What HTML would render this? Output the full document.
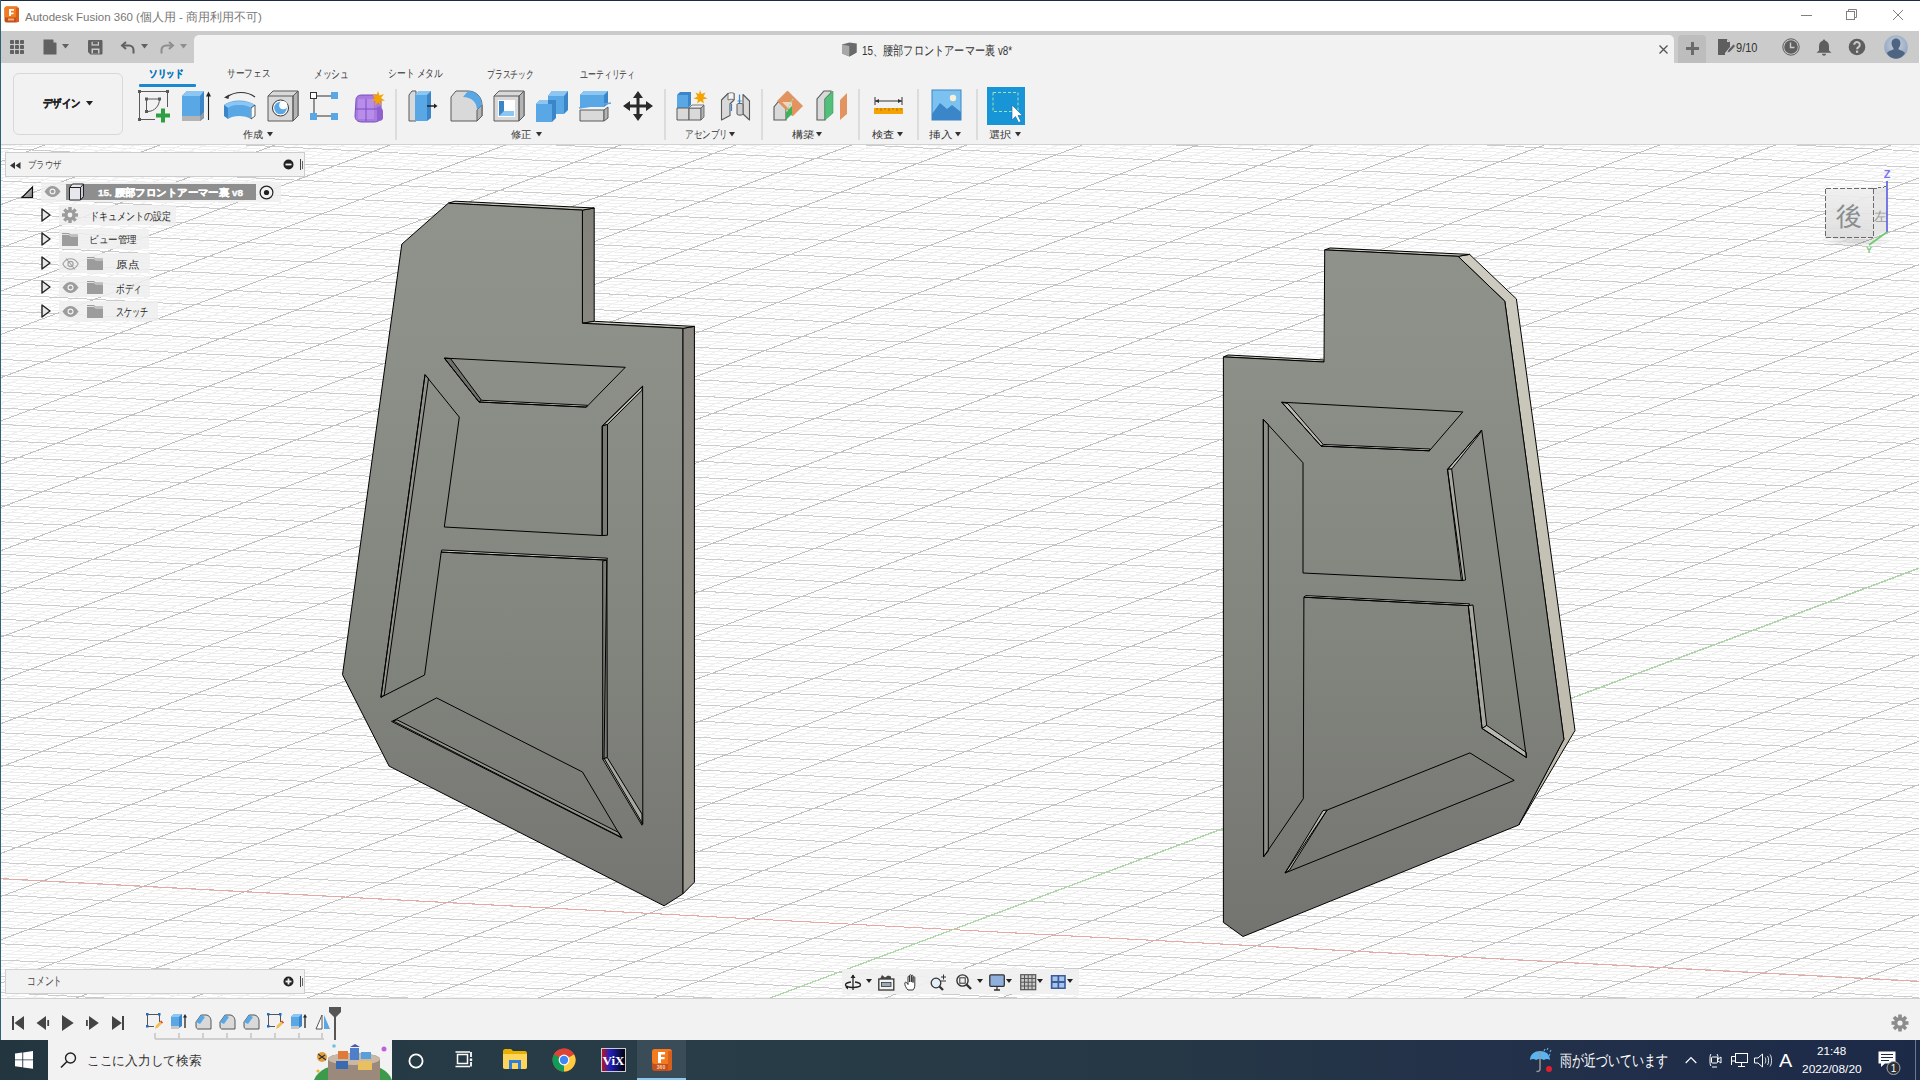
<!DOCTYPE html>
<html><head><meta charset="utf-8"><title>Fusion 360</title>
<style>
*{box-sizing:border-box}
html,body{margin:0;padding:0}
body{width:1920px;height:1080px;overflow:hidden;position:relative;background:#fff;font-family:"Liberation Sans", sans-serif;color:#333}
.a{position:absolute}
.t{position:absolute;white-space:nowrap;line-height:1}
svg{position:absolute;overflow:visible}
</style></head><body>
<svg class="a" style="left:0;top:0" width="1920" height="1080" viewBox="0 0 1920 1080">
<defs>
<linearGradient id="gf" x1="0" y1="200" x2="0" y2="940" gradientUnits="userSpaceOnUse">
<stop offset="0" stop-color="#90928c"/><stop offset="0.203" stop-color="#8d8f89"/><stop offset="0.601" stop-color="#82847e"/><stop offset="0.905" stop-color="#777873"/><stop offset="1" stop-color="#737470"/></linearGradient>
<linearGradient id="gs" x1="0" y1="208" x2="0" y2="890" gradientUnits="userSpaceOnUse">
<stop offset="0" stop-color="#83827a"/><stop offset="0.58" stop-color="#95928a"/><stop offset="1" stop-color="#9d9b91"/></linearGradient>
<linearGradient id="gr" x1="0" y1="255" x2="0" y2="820" gradientUnits="userSpaceOnUse">
<stop offset="0" stop-color="#cdcbbf"/><stop offset="1" stop-color="#bcb9ab"/></linearGradient>
<clipPath id="vpc"><rect x="1" y="145" width="1918" height="853"/></clipPath>
</defs>
<rect x="0" y="145" width="1920" height="853" fill="#ffffff"/>
<g clip-path="url(#vpc)" shape-rendering="crispEdges" fill="none">
<path d="M1.0 152.7L21.6 145.0M1.0 170.0L67.6 145.0M1.0 178.7L90.6 145.0M1.0 187.3L113.7 145.0M1.0 196.0L136.7 145.0M1.0 213.3L182.8 145.0M1.0 221.9L205.8 145.0M1.0 230.6L228.9 145.0M1.0 239.2L251.9 145.0M1.0 256.5L298.0 145.0M1.0 265.2L321.1 145.0M1.0 273.8L344.1 145.0M1.0 282.5L367.1 145.0M1.0 299.8L413.3 145.0M1.0 308.4L436.3 145.0M1.0 317.1L459.4 145.0M1.0 325.7L482.4 145.0M1.0 343.0L528.5 145.0M1.0 351.7L551.6 145.0M1.0 360.3L574.6 145.0M1.0 369.0L597.7 145.0M1.0 386.3L643.8 145.0M1.0 394.9L666.9 145.0M1.0 403.6L690.0 145.0M1.0 412.2L713.0 145.0M1.0 429.5L759.2 145.0M1.0 438.1L782.2 145.0M1.0 446.8L805.3 145.0M1.0 455.4L828.4 145.0M1.0 472.7L874.5 145.0M1.0 481.4L897.6 145.0M1.0 490.0L920.7 145.0M1.0 498.7L943.8 145.0M1.0 516.0L989.9 145.0M1.0 524.6L1013.0 145.0M1.0 533.3L1036.1 145.0M1.0 541.9L1059.2 145.0M1.0 559.2L1105.4 145.0M1.0 567.9L1128.4 145.0M1.0 576.5L1151.5 145.0M1.0 585.2L1174.6 145.0M1.0 602.5L1220.8 145.0M1.0 611.1L1243.9 145.0M1.0 619.8L1267.0 145.0M1.0 628.4L1290.1 145.0M1.0 645.7L1336.3 145.0M1.0 654.4L1359.4 145.0M1.0 663.0L1382.5 145.0M1.0 671.7L1405.6 145.0M1.0 689.0L1451.8 145.0M1.0 697.6L1474.9 145.0M1.0 706.3L1498.0 145.0M1.0 714.9L1521.2 145.0M1.0 732.2L1567.4 145.0M1.0 740.8L1590.5 145.0M1.0 749.5L1613.6 145.0M1.0 758.1L1636.7 145.0M1.0 775.4L1683.0 145.0M1.0 784.1L1706.1 145.0M1.0 792.7L1729.2 145.0M1.0 801.4L1752.3 145.0M1.0 818.7L1798.6 145.0M1.0 827.3L1821.7 145.0M1.0 836.0L1844.8 145.0M1.0 844.6L1868.0 145.0M1.0 861.9L1914.2 145.0M1.0 870.6L1919.0 151.9M1.0 879.2L1919.0 160.5M1.0 887.9L1919.0 169.2M1.0 905.2L1919.0 186.6M1.0 913.8L1919.0 195.2M1.0 922.5L1919.0 203.9M1.0 931.1L1919.0 212.6M1.0 948.4L1919.0 229.9M1.0 957.0L1919.0 238.6M1.0 965.7L1919.0 247.2M1.0 974.3L1919.0 255.9M1.0 991.6L1919.0 273.2M7.1 998.0L1919.0 281.9M30.2 998.0L1919.0 290.6M53.3 998.0L1919.0 299.2M99.5 998.0L1919.0 316.6M122.5 998.0L1919.0 325.2M145.6 998.0L1919.0 333.9M168.7 998.0L1919.0 342.6M214.9 998.0L1919.0 359.9M238.0 998.0L1919.0 368.6M261.1 998.0L1919.0 377.2M284.2 998.0L1919.0 385.9M330.4 998.0L1919.0 403.2M353.5 998.0L1919.0 411.9M376.7 998.0L1919.0 420.6M399.8 998.0L1919.0 429.2M446.0 998.0L1919.0 446.6M469.1 998.0L1919.0 455.2M492.2 998.0L1919.0 463.9M515.3 998.0L1919.0 472.6M561.6 998.0L1919.0 489.9M584.7 998.0L1919.0 498.6M607.8 998.0L1919.0 507.3M630.9 998.0L1919.0 515.9M677.2 998.0L1919.0 533.3M700.3 998.0L1919.0 541.9M723.4 998.0L1919.0 550.6M746.5 998.0L1919.0 559.3M792.8 998.0L1919.0 576.6M815.9 998.0L1919.0 585.3M839.1 998.0L1919.0 593.9M862.2 998.0L1919.0 602.6M908.5 998.0L1919.0 619.9M931.6 998.0L1919.0 628.6M954.7 998.0L1919.0 637.3M977.9 998.0L1919.0 645.9M1024.2 998.0L1919.0 663.3M1047.3 998.0L1919.0 671.9M1070.4 998.0L1919.0 680.6M1093.6 998.0L1919.0 689.3M1139.9 998.0L1919.0 706.6M1163.0 998.0L1919.0 715.3M1186.2 998.0L1919.0 723.9M1209.3 998.0L1919.0 732.6M1255.6 998.0L1919.0 749.9M1278.8 998.0L1919.0 758.6M1302.0 998.0L1919.0 767.3M1325.1 998.0L1919.0 775.9M1371.4 998.0L1919.0 793.3M1394.6 998.0L1919.0 801.9M1417.8 998.0L1919.0 810.6M1440.9 998.0L1919.0 819.3M1487.3 998.0L1919.0 836.6M1510.4 998.0L1919.0 845.3M1533.6 998.0L1919.0 853.9M1556.8 998.0L1919.0 862.6M1603.1 998.0L1919.0 879.9M1626.3 998.0L1919.0 888.6M1649.5 998.0L1919.0 897.2M1672.6 998.0L1919.0 905.9M1719.0 998.0L1919.0 923.2M1742.2 998.0L1919.0 931.9M1765.4 998.0L1919.0 940.6M1788.5 998.0L1919.0 949.2M1834.9 998.0L1919.0 966.6M1858.1 998.0L1919.0 975.2M1881.3 998.0L1919.0 983.9M1904.5 998.0L1919.0 992.6M1.0 995.7L43.5 998.0M1.0 989.2L165.0 998.0M1.0 986.0L225.8 998.0M1.0 982.7L286.5 998.0M1.0 979.5L347.3 998.0M1.0 973.0L468.9 998.0M1.0 969.8L529.7 998.0M1.0 966.5L590.6 998.0M1.0 963.3L651.4 998.0M1.0 956.8L773.1 998.0M1.0 953.5L833.9 998.0M1.0 950.3L894.8 998.0M1.0 947.0L955.7 998.0M1.0 940.5L1077.5 998.0M1.0 937.3L1138.4 998.0M1.0 934.1L1199.3 998.0M1.0 930.8L1260.2 998.0M1.0 924.3L1382.0 998.0M1.0 921.1L1443.0 998.0M1.0 917.8L1503.9 998.0M1.0 914.6L1564.9 998.0M1.0 908.1L1686.8 998.0M1.0 904.8L1747.8 998.0M1.0 901.6L1808.8 998.0M1.0 898.3L1869.8 998.0M1.0 891.9L1919.0 994.1M1.0 888.6L1919.0 990.9M1.0 885.4L1919.0 987.6M1.0 882.1L1919.0 984.4M1.0 875.6L1919.0 977.8M1.0 872.4L1919.0 974.6M1.0 869.1L1919.0 971.3M1.0 865.9L1919.0 968.1M1.0 859.4L1919.0 961.6M1.0 856.1L1919.0 958.3M1.0 852.9L1919.0 955.1M1.0 849.7L1919.0 951.8M1.0 843.2L1919.0 945.3M1.0 839.9L1919.0 942.1M1.0 836.7L1919.0 938.8M1.0 833.4L1919.0 935.6M1.0 826.9L1919.0 929.0M1.0 823.7L1919.0 925.8M1.0 820.4L1919.0 922.5M1.0 817.2L1919.0 919.3M1.0 810.7L1919.0 912.8M1.0 807.5L1919.0 909.5M1.0 804.2L1919.0 906.3M1.0 801.0L1919.0 903.0M1.0 794.5L1919.0 896.5M1.0 791.2L1919.0 893.3M1.0 788.0L1919.0 890.0M1.0 784.7L1919.0 886.8M1.0 778.2L1919.0 880.2M1.0 775.0L1919.0 877.0M1.0 771.7L1919.0 873.7M1.0 768.5L1919.0 870.5M1.0 762.0L1919.0 864.0M1.0 758.8L1919.0 860.7M1.0 755.5L1919.0 857.5M1.0 752.3L1919.0 854.2M1.0 745.8L1919.0 847.7M1.0 742.5L1919.0 844.5M1.0 739.3L1919.0 841.2M1.0 736.0L1919.0 838.0M1.0 729.5L1919.0 831.4M1.0 726.3L1919.0 828.2M1.0 723.1L1919.0 824.9M1.0 719.8L1919.0 821.7M1.0 713.3L1919.0 815.2M1.0 710.1L1919.0 811.9M1.0 706.8L1919.0 808.7M1.0 703.6L1919.0 805.4M1.0 697.1L1919.0 798.9M1.0 693.8L1919.0 795.7M1.0 690.6L1919.0 792.4M1.0 687.3L1919.0 789.1M1.0 680.8L1919.0 782.6M1.0 677.6L1919.0 779.4M1.0 674.4L1919.0 776.1M1.0 671.1L1919.0 772.9M1.0 664.6L1919.0 766.4M1.0 661.4L1919.0 763.1M1.0 658.1L1919.0 759.9M1.0 654.9L1919.0 756.6M1.0 648.4L1919.0 750.1M1.0 645.1L1919.0 746.9M1.0 641.9L1919.0 743.6M1.0 638.6L1919.0 740.3M1.0 632.2L1919.0 733.8M1.0 628.9L1919.0 730.6M1.0 625.7L1919.0 727.3M1.0 622.4L1919.0 724.1M1.0 615.9L1919.0 717.6M1.0 612.7L1919.0 714.3M1.0 609.4L1919.0 711.1M1.0 606.2L1919.0 707.8M1.0 599.7L1919.0 701.3M1.0 596.4L1919.0 698.0M1.0 593.2L1919.0 694.8M1.0 589.9L1919.0 691.5M1.0 583.5L1919.0 685.0M1.0 580.2L1919.0 681.8M1.0 577.0L1919.0 678.5M1.0 573.7L1919.0 675.3M1.0 567.2L1919.0 668.8M1.0 564.0L1919.0 665.5M1.0 560.7L1919.0 662.3M1.0 557.5L1919.0 659.0M1.0 551.0L1919.0 652.5M1.0 547.7L1919.0 649.2M1.0 544.5L1919.0 646.0M1.0 541.3L1919.0 642.7M1.0 534.8L1919.0 636.2M1.0 531.5L1919.0 633.0M1.0 528.3L1919.0 629.7M1.0 525.0L1919.0 626.5M1.0 518.5L1919.0 620.0M1.0 515.3L1919.0 616.7M1.0 512.0L1919.0 613.4M1.0 508.8L1919.0 610.2M1.0 502.3L1919.0 603.7M1.0 499.0L1919.0 600.4M1.0 495.8L1919.0 597.2M1.0 492.6L1919.0 593.9M1.0 486.1L1919.0 587.4M1.0 482.8L1919.0 584.2M1.0 479.6L1919.0 580.9M1.0 476.3L1919.0 577.7M1.0 469.8L1919.0 571.2M1.0 466.6L1919.0 567.9M1.0 463.3L1919.0 564.6M1.0 460.1L1919.0 561.4M1.0 453.6L1919.0 554.9M1.0 450.3L1919.0 551.6M1.0 447.1L1919.0 548.4M1.0 443.9L1919.0 545.1M1.0 437.4L1919.0 538.6M1.0 434.1L1919.0 535.4M1.0 430.9L1919.0 532.1M1.0 427.6L1919.0 528.9M1.0 421.1L1919.0 522.3M1.0 417.9L1919.0 519.1M1.0 414.6L1919.0 515.8M1.0 411.4L1919.0 512.6M1.0 404.9L1919.0 506.1M1.0 401.6L1919.0 502.8M1.0 398.4L1919.0 499.6M1.0 395.2L1919.0 496.3M1.0 388.7L1919.0 489.8M1.0 385.4L1919.0 486.6M1.0 382.2L1919.0 483.3M1.0 378.9L1919.0 480.0M1.0 372.4L1919.0 473.5M1.0 369.2L1919.0 470.3M1.0 365.9L1919.0 467.0M1.0 362.7L1919.0 463.8M1.0 356.2L1919.0 457.3M1.0 352.9L1919.0 454.0M1.0 349.7L1919.0 450.8M1.0 346.5L1919.0 447.5M1.0 340.0L1919.0 441.0M1.0 336.7L1919.0 437.7M1.0 333.5L1919.0 434.5M1.0 330.2L1919.0 431.2M1.0 323.7L1919.0 424.7M1.0 320.5L1919.0 421.5M1.0 317.2L1919.0 418.2M1.0 314.0L1919.0 415.0M1.0 307.5L1919.0 408.5M1.0 304.2L1919.0 405.2M1.0 301.0L1919.0 401.9M1.0 297.8L1919.0 398.7M1.0 291.3L1919.0 392.2M1.0 288.0L1919.0 388.9M1.0 284.8L1919.0 385.7M1.0 281.5L1919.0 382.4M1.0 275.0L1919.0 375.9M1.0 271.8L1919.0 372.7M1.0 268.5L1919.0 369.4M1.0 265.3L1919.0 366.2M1.0 258.8L1919.0 359.6M1.0 255.5L1919.0 356.4M1.0 252.3L1919.0 353.1M1.0 249.1L1919.0 349.9M1.0 242.6L1919.0 343.4M1.0 239.3L1919.0 340.1M1.0 236.1L1919.0 336.9M1.0 232.8L1919.0 333.6M1.0 226.3L1919.0 327.1M1.0 223.1L1919.0 323.9M1.0 219.8L1919.0 320.6M1.0 216.6L1919.0 317.3M1.0 210.1L1919.0 310.8M1.0 206.8L1919.0 307.6M1.0 203.6L1919.0 304.3M1.0 200.4L1919.0 301.1M1.0 193.9L1919.0 294.6M1.0 190.6L1919.0 291.3M1.0 187.4L1919.0 288.1M1.0 184.1L1919.0 284.8M1.0 177.6L1919.0 278.3M1.0 174.4L1919.0 275.0M1.0 171.1L1919.0 271.8M1.0 167.9L1919.0 268.5M1.0 161.4L1919.0 262.0M1.0 158.1L1919.0 258.8M1.0 154.9L1919.0 255.5M1.0 151.6L1919.0 252.3M1.0 145.2L1919.0 245.8M60.0 145.0L1919.0 242.5M121.9 145.0L1919.0 239.2M183.8 145.0L1919.0 236.0M307.7 145.0L1919.0 229.5M369.7 145.0L1919.0 226.2M431.6 145.0L1919.0 223.0M493.6 145.0L1919.0 219.7M617.6 145.0L1919.0 213.2M679.6 145.0L1919.0 210.0M741.6 145.0L1919.0 206.7M803.6 145.0L1919.0 203.5M927.6 145.0L1919.0 196.9M989.7 145.0L1919.0 193.7M1051.7 145.0L1919.0 190.4M1113.8 145.0L1919.0 187.2M1237.9 145.0L1919.0 180.7M1300.0 145.0L1919.0 177.4M1362.1 145.0L1919.0 174.2M1424.2 145.0L1919.0 170.9M1548.5 145.0L1919.0 164.4M1610.6 145.0L1919.0 161.1M1672.7 145.0L1919.0 157.9M1734.9 145.0L1919.0 154.6M1859.2 145.0L1919.0 148.1" stroke="#efefef" stroke-width="1"/>
<path d="M1.0 992.5L104.2 998.0M1.0 976.3L408.1 998.0M1.0 960.0L712.2 998.0M1.0 943.8L1016.6 998.0M1.0 927.6L1321.1 998.0M1.0 911.3L1625.9 998.0M1.0 895.1L1919.0 997.4M1.0 878.9L1919.0 981.1M1.0 862.6L1919.0 964.8M1.0 846.4L1919.0 948.6M1.0 830.2L1919.0 932.3M1.0 813.9L1919.0 916.0M1.0 797.7L1919.0 899.8M1.0 781.5L1919.0 883.5M1.0 765.3L1919.0 867.2M1.0 749.0L1919.0 851.0M1.0 732.8L1919.0 834.7M1.0 716.6L1919.0 818.4M1.0 700.3L1919.0 802.2M1.0 684.1L1919.0 785.9M1.0 667.9L1919.0 769.6M1.0 651.6L1919.0 753.4M1.0 635.4L1919.0 737.1M1.0 619.2L1919.0 720.8M1.0 602.9L1919.0 704.6M1.0 586.7L1919.0 688.3M1.0 570.5L1919.0 672.0M1.0 554.2L1919.0 655.7M1.0 538.0L1919.0 639.5M1.0 521.8L1919.0 623.2M1.0 505.5L1919.0 606.9M1.0 489.3L1919.0 590.7M1.0 473.1L1919.0 574.4M1.0 456.8L1919.0 558.1M1.0 440.6L1919.0 541.9M1.0 424.4L1919.0 525.6M1.0 408.1L1919.0 509.3M1.0 391.9L1919.0 493.1M1.0 375.7L1919.0 476.8M1.0 359.4L1919.0 460.5M1.0 343.2L1919.0 444.2M1.0 327.0L1919.0 428.0M1.0 310.7L1919.0 411.7M1.0 294.5L1919.0 395.4M1.0 278.3L1919.0 379.2M1.0 262.0L1919.0 362.9M1.0 245.8L1919.0 346.6M1.0 229.6L1919.0 330.4M1.0 213.3L1919.0 314.1M1.0 197.1L1919.0 297.8M1.0 180.9L1919.0 281.5M1.0 164.6L1919.0 265.3M1.0 148.4L1919.0 249.0M245.8 145.0L1919.0 232.7M555.6 145.0L1919.0 216.5M865.6 145.0L1919.0 200.2M1175.9 145.0L1919.0 183.9M1486.3 145.0L1919.0 167.7M1797.1 145.0L1919.0 151.4" stroke="#cbcbcb" stroke-width="1"/>
<path d="M1.0 161.4L44.6 145.0M1.0 204.6L159.8 145.0M1.0 247.9L275.0 145.0M1.0 291.1L390.2 145.0M1.0 334.4L505.5 145.0M1.0 377.6L620.8 145.0M1.0 420.9L736.1 145.0M1.0 464.1L851.5 145.0M1.0 507.3L966.8 145.0M1.0 550.6L1082.3 145.0M1.0 593.8L1197.7 145.0M1.0 637.1L1313.2 145.0M1.0 680.3L1428.7 145.0M1.0 723.6L1544.3 145.0M1.0 766.8L1659.8 145.0M1.0 810.0L1775.5 145.0M1.0 853.3L1891.1 145.0M1.0 896.5L1919.0 177.9M1.0 939.7L1919.0 221.2M1.0 983.0L1919.0 264.6M76.4 998.0L1919.0 307.9M191.8 998.0L1919.0 351.2M307.3 998.0L1919.0 394.6M422.9 998.0L1919.0 437.9M538.4 998.0L1919.0 481.2M654.0 998.0L1919.0 524.6M769.7 998.0L1919.0 567.9M885.3 998.0L1919.0 611.3M1001.0 998.0L1919.0 654.6M1116.7 998.0L1919.0 697.9M1232.5 998.0L1919.0 741.3M1348.3 998.0L1919.0 784.6M1464.1 998.0L1919.0 827.9M1579.9 998.0L1919.0 871.3M1695.8 998.0L1919.0 914.6M1811.7 998.0L1919.0 957.9" stroke="#c0c0c0" stroke-width="1"/>
<path d="M0 878.5L1919 981.5" stroke="#e6a8a4" stroke-width="1"/>
<path d="M771.9 997.5L1919 568.5" stroke="#a8dea0" stroke-width="1"/>
</g>
<g stroke="#000" stroke-width="1" stroke-linejoin="miter">
<polygon points="582.4,210.1 594.2,208 594.2,321.3 582.4,323.3" fill="url(#gs)"/>
<polygon points="682.8,328.3 694.4,326.4 694.4,882.2 682.8,893.9" fill="url(#gs)"/>
<polygon points="448.3,203.2 455,201.2 594.2,208 582.4,210.1" fill="#c9c7bb"/>
<polygon points="582.4,323.3 594.2,321.3 694.4,326.4 682.8,328.3" fill="#c9c7bb"/>
<polygon points="401.8,244.2 448.3,203.2 582.4,210.1 582.4,323.3 682.8,328.3 682.8,893.9 664.1,905.8 389.1,766.1 342.5,674.7" fill="url(#gf)"/>
<polygon points="1458,256.3 1469.6,254.4 1516.4,298.9 1575,730.5 1518.7,825 1563.9,739.3 1504.8,301.2" fill="url(#gr)"/>
<polygon points="1324.7,249.9 1330,248 1469.6,254.4 1458,256.3" fill="#c9c7bb"/>
<polygon points="1223.6,356.9 1228,355 1324.7,360 1324,362" fill="#c9c7bb"/>
<polygon points="1324.7,249.9 1458,256.3 1504.8,301.2 1563.9,739.3 1518.7,825 1243,936.5 1223.4,922.4 1223.4,356.9 1324,362" fill="url(#gf)"/>
</g>
<g stroke="#000" stroke-width="1">
<polygon points="444.3,358.1 450.5,358.6 481.5,400.3 479,402" fill="#6f706b"/><polygon points="479,402 481.5,400.3 587.5,405.3 586.4,407.1" fill="#c4c4bc"/><polygon points="425,374.7 428.5,378.5 384.3,694.8 380.9,697.3" fill="#90918c"/><polygon points="642.6,386.2 641.9,390.4 607.5,424.4 602.4,426" fill="#bdbdb5"/><polygon points="602.4,426 607.5,424.4 607.5,535.2 602.1,535.6" fill="#7a7a75"/><polygon points="441.2,552.1 441.8,550 607.5,558.2 606.9,560.1" fill="#c4c4bc"/><polygon points="602.7,561 606.9,560.1 607.3,757.6 602.7,759" fill="#7a7a75"/><polygon points="602.7,759 607.3,757.6 642,814 642,825.2" fill="#a8a8a0"/><polygon points="391.5,721.4 397,719.8 618.9,832.6 622.1,838.1" fill="#92928d"/><polygon points="1281.7,402.2 1287.8,403.6 1323.9,445.3 1321.1,446.1" fill="#b8b8b0"/><polygon points="1321.1,446.1 1323.9,444.5 1430,449 1429.4,450.8" fill="#c4c4bc"/><polygon points="1263.3,419.4 1268.3,424.4 1268.3,851 1263.6,856.8" fill="#8e8f8a"/><polygon points="1481.7,430 1479.4,434.2 1451.7,468.9 1447.5,469.4" fill="#c0c0b8"/><polygon points="1447.5,469.4 1451.7,468.9 1465.6,580 1461.4,580.6" fill="#a8a8a0"/><polygon points="1303.9,597.2 1305.8,595.6 1469.7,603.9 1468.3,605.6" fill="#c4c4bc"/><polygon points="1468.3,605.6 1473,605 1486.7,725.4 1482.1,728.5" fill="#a8a8a0"/><polygon points="1482.1,728.5 1486.7,725.4 1526.4,752.5 1526.4,757.5" fill="#b8b8b0"/><polygon points="1285,873 1289.5,870 1327.2,810 1323,810.5" fill="#b8b8b0"/>
</g>
<g stroke="#000" stroke-width="1" fill="none">
<polygon points="425,374.7 459.3,417.1 444.3,527 602.1,535.6 602.1,426.1 642.6,386.3 642.8,824.2 604,758.2 606.9,560.1 441.2,552.1 424.6,675 380.9,697.3"/><polygon points="444.3,358.1 625.3,367.3 586.4,407.1 479,402"/><polygon points="436.6,697.9 582.5,772 621.2,837.2 393,720.9"/>
<polygon points="1263.3,419.4 1303,462.8 1303,573 1462.8,580.6 1447.5,469.4 1481.7,430 1526.4,757.5 1482.1,728.5 1468.3,605.6 1303.9,597.2 1303.3,798.75 1263.6,856.8"/><polygon points="1281.7,402.2 1462.8,411.9 1429.4,450.8 1321.1,446.1"/><polygon points="1327.2,810 1469.9,752.9 1514.2,780.4 1285,873"/>
</g>
</svg>
<svg style="left:1815px;top:160px" width="95" height="100" viewBox="1815 160 95 100">
<defs><linearGradient id="vc" x1="0" y1="0" x2="0" y2="1"><stop offset="0" stop-color="#efefef"/><stop offset="1" stop-color="#dcdcdc"/></linearGradient>
<radialGradient id="vsh" cx="0.5" cy="0.5" r="0.5"><stop offset="0" stop-color="#000" stop-opacity="0.16"/><stop offset="1" stop-color="#000" stop-opacity="0"/></radialGradient></defs>
<ellipse cx="1856" cy="241" rx="38" ry="6" fill="url(#vsh)"/>
<path d="M1825 188H1873V238H1825z" fill="url(#vc)" opacity="0.9"/>
<path d="M1873 188L1887 186V231L1873 238z" fill="#e4e4e4" opacity="0.9"/>
<g fill="none" stroke="#6a6a6a" stroke-width="1" shape-rendering="crispEdges">
<path d="M1825.5 188.5H1873.5M1825.5 188.5V237.5" stroke-dasharray="5 2"/>
<path d="M1873.5 189V238" stroke-dasharray="5 2"/><path d="M1825.5 237.5H1873" stroke-dasharray="5 2"/>
<path d="M1873.5 188.5L1887 186.5" stroke-dasharray="3 2"/></g>
<text x="1849" y="225" font-size="26" text-anchor="middle" fill="#8a8d90" font-family="Liberation Sans, sans-serif">後</text>
<text x="1880" y="221" font-size="13" text-anchor="middle" fill="#9a9a9a" font-family="Liberation Sans, sans-serif">左</text>
<path d="M1887 181V232" stroke="#5a5ae0" stroke-width="1.6"/>
<path d="M1887 232L1869 245" stroke="#6ccc6c" stroke-width="1.6"/>
<text x="1887" y="178" font-size="11" text-anchor="middle" fill="#7474ee" font-weight="bold" font-family="Liberation Sans, sans-serif">Z</text>
<text x="1869" y="253" font-size="9" text-anchor="middle" fill="#6ccc6c" font-weight="bold" font-family="Liberation Sans, sans-serif">Y</text>
</svg>

<div class="a" style="left:5px;top:152px;width:300px;height:25px;background:#f2f2f2;border:1px solid #cdcdcd"></div>
<svg style="left:10px;top:162px" width="11" height="7" viewBox="0 0 11 7" fill="#333"><path d="M0 3.5L5 0V7z M5.5 3.5L10.5 0V7z"/></svg>
<svg style="left:283px;top:159px" width="11" height="11" viewBox="0 0 11 11"><circle cx="5.5" cy="5.5" r="5" fill="#222"/><rect x="2.5" y="4.6" width="6" height="1.8" fill="#f2f2f2"/></svg>
<div class="a" style="left:300px;top:159px;width:1px;height:11px;background:#444"></div>
<div class="a" style="left:302px;top:161px;width:1px;height:8px;background:#666"></div>
<div class="a" style="left:41px;top:182px;width:240px;height:20px;background:rgba(238,238,238,0.85)"></div>
<svg style="left:21px;top:186px" width="13" height="13" viewBox="0 0 13 13"><defs><linearGradient id="tg" x1="0" y1="0" x2="1" y2="1"><stop offset="0" stop-color="#eee"/><stop offset="1" stop-color="#777"/></linearGradient></defs><path d="M11.5 1V11.5H1z" fill="url(#tg)" stroke="#111" stroke-width="1.2" stroke-linejoin="miter"/></svg>
<svg style="left:44px;top:186px" width="17" height="11" viewBox="0 0 17 11"><path d="M0.5 5.5C3 1.5 6 0 8.5 0S14 1.5 16.5 5.5C14 9.5 11 11 8.5 11S3 9.5 0.5 5.5z" fill="#9c9c9c"/>
<circle cx="8.5" cy="5.5" r="3" fill="#f2f2f2"/><circle cx="8.5" cy="5.5" r="1.8" fill="#9c9c9c"/></svg>
<div class="a" style="left:66px;top:184px;width:190px;height:16px;background:#8e8e8e"></div>
<svg style="left:68px;top:183px" width="17" height="18" viewBox="0 0 17 18"><path d="M1.5 4.5L4.5 1H15.5V13.5L12.5 17H1.5z" fill="#e6e8ee" stroke="#222" stroke-width="1"/><path d="M12.5 4.5L15.5 1V13.5L12.5 17z" fill="#c8ccd6" stroke="#222" stroke-width="1"/><path d="M1.5 4.5H12.5V17" fill="none" stroke="#222" stroke-width="1"/></svg>
<svg style="left:259px;top:185px" width="15" height="15" viewBox="0 0 15 15"><circle cx="7.5" cy="7.5" r="6.4" fill="#f2f2f2" stroke="#222" stroke-width="1.2"/><circle cx="7.5" cy="7.5" r="2.6" fill="#222"/></svg>
<div class="a" style="left:59px;top:205px;width:117px;height:20px;background:rgba(238,238,238,0.85)"></div>
<svg style="left:41px;top:208px" width="10" height="14" viewBox="0 0 10 14"><path d="M1 1L9 7L1 13z" fill="#e8e8e8" stroke="#222" stroke-width="1.4" stroke-linejoin="round"/></svg>
<svg style="left:62px;top:207px" width="16" height="16" viewBox="0 0 16 16"><g fill="#9c9c9c"><circle cx="8" cy="8" r="5.6"/>
<rect x="6.3" y="0" width="3.4" height="16"/><rect x="0" y="6.3" width="16" height="3.4"/><rect x="6.3" y="0" width="3.4" height="16" transform="rotate(45 8 8)"/><rect x="6.3" y="0" width="3.4" height="16" transform="rotate(-45 8 8)"/></g><circle cx="8" cy="8" r="2.4" fill="#f2f2f2"/></svg>

<div class="a" style="left:59px;top:229px;width:90px;height:20px;background:rgba(238,238,238,0.85)"></div>
<svg style="left:41px;top:232px" width="10" height="14" viewBox="0 0 10 14"><path d="M1 1L9 7L1 13z" fill="#e8e8e8" stroke="#222" stroke-width="1.4" stroke-linejoin="round"/></svg>
<svg style="left:62px;top:233px" width="17" height="13" viewBox="0 0 17 13" fill="#9c9c9c"><path d="M0 0H7L8.5 1.5H16V2.5H0z"/><rect x="0" y="2" width="16" height="11"/><path d="M0 1.5H7L8.5 3H16" fill="none" stroke="#f2f2f2" stroke-width="0.8"/></svg>

<div class="a" style="left:59px;top:253px;width:91px;height:20px;background:rgba(238,238,238,0.85)"></div>
<svg style="left:41px;top:256px" width="10" height="14" viewBox="0 0 10 14"><path d="M1 1L9 7L1 13z" fill="#e8e8e8" stroke="#222" stroke-width="1.4" stroke-linejoin="round"/></svg>
<svg style="left:62px;top:258px" width="17" height="12" viewBox="0 0 17 12"><path d="M0.8 6C3 2 6 0.8 8.5 0.8S14 2 16.2 6C14 10 11 11.2 8.5 11.2S3 10 0.8 6z" fill="none" stroke="#a0a0a0" stroke-width="1.1"/>
<circle cx="8.5" cy="6" r="2.6" fill="none" stroke="#a0a0a0" stroke-width="1.1"/><path d="M4 0.5L13 11.5" stroke="#a0a0a0" stroke-width="1.1"/></svg>
<svg style="left:87px;top:257px" width="17" height="13" viewBox="0 0 17 13" fill="#9c9c9c"><path d="M0 0H7L8.5 1.5H16V2.5H0z"/><rect x="0" y="2" width="16" height="11"/><path d="M0 1.5H7L8.5 3H16" fill="none" stroke="#f2f2f2" stroke-width="0.8"/></svg>

<div class="a" style="left:59px;top:277px;width:91px;height:20px;background:rgba(238,238,238,0.85)"></div>
<svg style="left:41px;top:280px" width="10" height="14" viewBox="0 0 10 14"><path d="M1 1L9 7L1 13z" fill="#e8e8e8" stroke="#222" stroke-width="1.4" stroke-linejoin="round"/></svg>
<svg style="left:62px;top:282px" width="17" height="11" viewBox="0 0 17 11"><path d="M0.5 5.5C3 1.5 6 0 8.5 0S14 1.5 16.5 5.5C14 9.5 11 11 8.5 11S3 9.5 0.5 5.5z" fill="#9c9c9c"/>
<circle cx="8.5" cy="5.5" r="3" fill="#f2f2f2"/><circle cx="8.5" cy="5.5" r="1.8" fill="#9c9c9c"/></svg>
<svg style="left:87px;top:281px" width="17" height="13" viewBox="0 0 17 13" fill="#9c9c9c"><path d="M0 0H7L8.5 1.5H16V2.5H0z"/><rect x="0" y="2" width="16" height="11"/><path d="M0 1.5H7L8.5 3H16" fill="none" stroke="#f2f2f2" stroke-width="0.8"/></svg>

<div class="a" style="left:59px;top:301px;width:99px;height:20px;background:rgba(238,238,238,0.85)"></div>
<svg style="left:41px;top:304px" width="10" height="14" viewBox="0 0 10 14"><path d="M1 1L9 7L1 13z" fill="#e8e8e8" stroke="#222" stroke-width="1.4" stroke-linejoin="round"/></svg>
<svg style="left:62px;top:306px" width="17" height="11" viewBox="0 0 17 11"><path d="M0.5 5.5C3 1.5 6 0 8.5 0S14 1.5 16.5 5.5C14 9.5 11 11 8.5 11S3 9.5 0.5 5.5z" fill="#9c9c9c"/>
<circle cx="8.5" cy="5.5" r="3" fill="#f2f2f2"/><circle cx="8.5" cy="5.5" r="1.8" fill="#9c9c9c"/></svg>
<svg style="left:87px;top:305px" width="17" height="13" viewBox="0 0 17 13" fill="#9c9c9c"><path d="M0 0H7L8.5 1.5H16V2.5H0z"/><rect x="0" y="2" width="16" height="11"/><path d="M0 1.5H7L8.5 3H16" fill="none" stroke="#f2f2f2" stroke-width="0.8"/></svg>

<div class="a" style="left:5px;top:969px;width:300px;height:25px;background:#f2f2f2;border:1px solid #d0d0d0"></div>
<svg style="left:283px;top:976px" width="11" height="11" viewBox="0 0 11 11"><circle cx="5.5" cy="5.5" r="5" fill="#222"/><rect x="2.5" y="4.6" width="6" height="1.8" fill="#f2f2f2"/><rect x="4.6" y="2.5" width="1.8" height="6" fill="#f2f2f2"/></svg>
<div class="a" style="left:300px;top:976px;width:1px;height:11px;background:#444"></div>
<div class="a" style="left:302px;top:978px;width:1px;height:8px;background:#666"></div>
<div class="a" style="left:842px;top:969px;width:237px;height:25px;background:rgba(240,240,240,0.92)"></div>
<svg style="left:845px;top:974px" width="28" height="17" viewBox="0 0 28 17">
<path d="M8 1V16" stroke="#222" stroke-width="1.3"/><path d="M5.5 4L8 0.5L10.5 4z" fill="#222"/>
<path d="M6 8C2 8.5 0.5 10 0.5 11S3 13.5 8 13.5S15.5 12 15.5 11S14 8.5 10 8" fill="none" stroke="#222" stroke-width="1.3"/>
<path d="M3 11.5L0.5 13.5L3 15.5z" fill="#222"/><path d="M21 5h6l-3 4z" fill="#222"/></svg>
<svg style="left:878px;top:974px" width="17" height="17" viewBox="0 0 17 17"><rect x="0.8" y="5" width="15" height="11" fill="#f2f2f2" stroke="#333" stroke-width="1.3"/><rect x="3.5" y="8.5" width="9.5" height="4" fill="#9aa8b8" stroke="#333" stroke-width="0.8"/><path d="M2 5L4 1L7 3.5L10 1.5L13 2.5V5" fill="#444"/></svg>
<svg style="left:904px;top:974px" width="16" height="17" viewBox="0 0 16 17"><path d="M4 16C2 14 0.5 11 0.8 9C1 8 2 8 3 9L4 10.5V3C4 2 5.5 2 5.5 3V8V1.5C5.5 0.5 7.3 0.5 7.3 1.5V8V2C7.3 1 9 1 9 2V8.5V3.5C9 2.5 10.8 2.5 10.8 3.5V11C10.8 13.5 10 15 9 16z" fill="#fff" stroke="#333" stroke-width="1"/></svg>
<svg style="left:930px;top:974px" width="17" height="17" viewBox="0 0 17 17"><circle cx="6" cy="9" r="4.8" fill="#e4eef6" stroke="#333" stroke-width="1.3"/><path d="M9.5 12.5L13 16" stroke="#333" stroke-width="2.3"/><path d="M11 3H16M13.5 0.5V5.5M11 7H16" stroke="#333" stroke-width="1"/></svg>
<svg style="left:956px;top:974px" width="28" height="17" viewBox="0 0 28 17"><circle cx="6.5" cy="6.5" r="5.6" fill="#f2f2f2" stroke="#333" stroke-width="1.4"/><rect x="3.8" y="3.8" width="5.4" height="5.4" fill="#f2f2f2" stroke="#333" stroke-width="1"/><path d="M10.5 10.5L15 15" stroke="#333" stroke-width="2.4"/><path d="M21 5h6l-3 4z" fill="#222"/></svg>
<svg style="left:989px;top:974px" width="24" height="17" viewBox="0 0 24 17"><rect x="0.8" y="0.8" width="14.5" height="11.5" rx="1" fill="#8fb0dc" stroke="#333" stroke-width="1.3"/><path d="M5 16H11M8 12.5V16" stroke="#333" stroke-width="1.3"/><path d="M17 5h6l-3 4z" fill="#222"/></svg>
<svg style="left:1020px;top:974px" width="24" height="17" viewBox="0 0 24 17"><rect x="0.7" y="0.7" width="15" height="15" fill="#c8c8c8" stroke="#555" stroke-width="1.2"/><path d="M4.5 1V16M8.2 1V16M12 1V16M1 4.5H16M1 8.2H16M1 12H16" stroke="#555" stroke-width="1"/><path d="M17 5h6l-3 4z" fill="#222"/></svg>
<svg style="left:1050px;top:974px" width="24" height="17" viewBox="0 0 24 17"><rect x="0.8" y="1" width="15" height="14" fill="#3a5c9a"/><rect x="2.5" y="2.5" width="5" height="4.5" fill="#a9c4ea"/><rect x="9.2" y="2.5" width="5" height="4.5" fill="#a9c4ea"/><rect x="2.5" y="9" width="5" height="4.5" fill="#a9c4ea"/><rect x="9.2" y="9" width="5" height="4.5" fill="#a9c4ea"/><path d="M17 5h6l-3 4z" fill="#222"/></svg>

<div class="a" style="left:0;top:0;width:1920px;height:31px;background:#fff"></div>
<svg style="left:4px;top:6px" width="16" height="17" viewBox="0 0 16 17">
<rect x="0.5" y="0.5" width="14" height="16" rx="2" fill="#c4501b"/>
<rect x="0.5" y="0.5" width="14" height="11" rx="2" fill="#f47a20"/>
<rect x="12" y="2" width="3" height="14" fill="#d9601c"/>
<path d="M5 3h5v1.8H7v1.8h2.6v1.7H7V10H5z" fill="#fff"/>
<rect x="4" y="12.5" width="6" height="2" fill="#f0b080"/>
</svg>
<div class="a" style="left:1801px;top:15px;width:11px;height:1px;background:#808080"></div>
<svg style="left:1846px;top:9px" width="12" height="12" viewBox="0 0 12 12" fill="none" stroke="#808080" stroke-width="1">
<rect x="0.5" y="2.5" width="8" height="8"/><path d="M2.5 2.5V0.5h8v8h-2"/></svg>
<svg style="left:1892px;top:9px" width="12" height="12" viewBox="0 0 12 12" fill="none" stroke="#808080" stroke-width="1">
<path d="M1 1L11 11M11 1L1 11"/></svg>

<div class="a" style="left:1px;top:31px;width:1918px;height:32px;background:#cbcbcb"></div>
<svg style="left:10px;top:40px" width="15" height="15" viewBox="0 0 15 15" fill="#616161">
<rect x="0" y="0" width="4" height="4" rx="0.8"/><rect x="5" y="0" width="4" height="4" rx="0.8"/><rect x="10" y="0" width="4" height="4" rx="0.8"/>
<rect x="0" y="5" width="4" height="4" rx="0.8"/><rect x="5" y="5" width="4" height="4" rx="0.8"/><rect x="10" y="5" width="4" height="4" rx="0.8"/>
<rect x="0" y="10" width="4" height="4" rx="0.8"/><rect x="5" y="10" width="4" height="4" rx="0.8"/><rect x="10" y="10" width="4" height="4" rx="0.8"/>
</svg>
<svg style="left:43px;top:39px" width="28" height="17" viewBox="0 0 28 17" fill="#616161">
<path d="M0.5 0.5h9.5l3.5 3.5v11.5h-13z"/><path d="M10.5 0.5v3h3z" fill="#cbcbcb"/>
<path d="M19 5h7l-3.5 4.5z"/></svg>
<svg style="left:88px;top:40px" width="15" height="15" viewBox="0 0 15 15" fill="#616161">
<path d="M1 0h12.5a1 1 0 0 1 1 1v12.5a1 1 0 0 1-1 1H2.5L0 12V1a1 1 0 0 1 1-1z"/>
<rect x="3.5" y="1.8" width="7.5" height="3.8" fill="#cbcbcb"/><rect x="4.8" y="1.8" width="5" height="2.5" fill="#616161"/>
<rect x="3.5" y="8.5" width="8" height="5" fill="#cbcbcb"/><rect x="5" y="10" width="5" height="3.5" fill="#616161"/>
</svg>
<svg style="left:120px;top:41px" width="30" height="13" viewBox="0 0 30 13" fill="none" stroke="#616161" stroke-width="2">
<path d="M13.5 12.5V9a4.5 4.5 0 0 0-4.5-4.5H2.5"/><path d="M6 1L2 4.5L6 8"/>
<path d="M21 3h7l-3.5 4.5z" fill="#616161" stroke="none"/></svg>
<svg style="left:160px;top:41px" width="30" height="13" viewBox="0 0 30 13" fill="none" stroke="#8e8e8e" stroke-width="2">
<path d="M1.5 12.5V9a4.5 4.5 0 0 1 4.5-4.5h6.5"/><path d="M9 1L13 4.5L9 8"/>
<path d="M20 3h7l-3.5 4.5z" fill="#8e8e8e" stroke="none"/></svg>
<div class="a" style="left:194px;top:35px;width:1480px;height:28px;background:#f2f2f2;border-radius:5px 5px 0 0"></div>
<svg style="left:841px;top:41px" width="16" height="16" viewBox="0 0 16 16">
<path d="M1 3.5L8.5 1.5L15.5 2.5V11.5L8.5 15.5L1 12.5z" fill="#6c6c6c"/>
<path d="M1 3.5L8.5 5V15.5L1 12.5z" fill="#a8a8a8"/>
<path d="M8.5 5L15.5 2.5V11.5L8.5 15.5z" fill="#6a6a6a"/>
</svg>
<svg style="left:1659px;top:45px" width="9" height="9" viewBox="0 0 9 9" fill="none" stroke="#555" stroke-width="1.3"><path d="M0.5 0.5L8.5 8.5M8.5 0.5L0.5 8.5"/></svg>
<div class="a" style="left:1678px;top:35px;width:28px;height:28px;background:#bdbdbd;border-radius:4px 4px 0 0"></div>
<svg style="left:1686px;top:42px" width="13" height="13" viewBox="0 0 13 13" fill="#6b6b6b"><rect x="5" y="0" width="3" height="13"/><rect x="0" y="5" width="13" height="3"/></svg>
<svg style="left:1718px;top:39px" width="17" height="17" viewBox="0 0 17 17">
<path d="M0 0h9l3 3v5l-5 6v2H0z" fill="#5e5e5e"/><path d="M9 0v3h3z" fill="#cbcbcb"/>
<path d="M9 14l1-3 5.5-6 2 2L12 13z" fill="#5e5e5e" stroke="#cbcbcb" stroke-width="0.8"/>
</svg>
<svg style="left:1782px;top:38px" width="18" height="18" viewBox="0 0 18 18">
<circle cx="9" cy="9" r="8.2" fill="none" stroke="#5e5e5e" stroke-width="1"/>
<circle cx="9" cy="9" r="6.8" fill="#5e5e5e"/><path d="M8.5 4.5V9.5H12.5" fill="none" stroke="#cbcbcb" stroke-width="1.4"/></svg>
<svg style="left:1816px;top:39px" width="16" height="17" viewBox="0 0 16 17" fill="#5e5e5e">
<path d="M8 0.5c0.9 0 1.2 0.6 1.2 1.3C11.8 2.4 13 4.8 13 7.5v4l2.5 2.2H0.5L3 11.5v-4C3 4.8 4.2 2.4 6.8 1.8 6.8 1.1 7.1 0.5 8 0.5z"/>
<path d="M6 14.8h4a2 2 0 0 1-4 0z"/></svg>
<svg style="left:1848px;top:38px" width="18" height="18" viewBox="0 0 18 18">
<circle cx="9" cy="9" r="8.3" fill="#5e5e5e"/>
<path d="M6.2 6.8a2.8 2.8 0 1 1 4.3 2.3c-0.9 0.6-1.4 1-1.4 2.2" fill="none" stroke="#cbcbcb" stroke-width="2"/>
<rect x="8" y="12.6" width="2.2" height="2.2" fill="#cbcbcb"/></svg>
<svg style="left:1884px;top:35px" width="24" height="24" viewBox="0 0 24 24">
<defs><radialGradient id="av" cx="0.5" cy="0.4" r="0.6"><stop offset="0" stop-color="#c9d3df"/><stop offset="1" stop-color="#8fa3bd"/></radialGradient></defs>
<circle cx="12" cy="12" r="11.8" fill="url(#av)"/>
<path d="M12 3.5c3 0 4.6 2.3 4.4 5.2-0.1 1.6-0.8 3.3-1.8 4.3v1.4c2.8 0.8 5.5 2 6.4 3.8A11.8 11.8 0 0 1 12 23.8 11.8 11.8 0 0 1 2.9 18.2c1-1.8 3.7-3 6.5-3.8V13c-1-1-1.7-2.7-1.8-4.3C7.4 5.8 9 3.5 12 3.5z" fill="#4f6480"/></svg>

<div class="a" style="left:1px;top:63px;width:1919px;height:81px;background:#f2f2f2"></div>
<div class="a" style="left:1px;top:144px;width:1919px;height:1px;background:#d2d2d2"></div>
<div class="a" style="left:13px;top:73px;width:110px;height:62px;border:1.5px solid #d8d8d8;border-radius:6px;background:#f2f2f2"></div>
<svg style="left:86px;top:101px" width="7" height="5" viewBox="0 0 7 5"><path d="M0 0h7L3.5 4.5z" fill="#222"/></svg>
<div class="a" style="left:139px;top:84px;width:57px;height:3px;background:#1a8ad0;border-radius:1px"></div>
<div class="a" style="left:395px;top:89px;width:2px;height:51px;background:#dcdcdc"></div>
<div class="a" style="left:664px;top:89px;width:2px;height:51px;background:#dcdcdc"></div>
<div class="a" style="left:761px;top:89px;width:2px;height:51px;background:#dcdcdc"></div>
<div class="a" style="left:858px;top:89px;width:2px;height:51px;background:#dcdcdc"></div>
<div class="a" style="left:917px;top:89px;width:2px;height:51px;background:#dcdcdc"></div>
<div class="a" style="left:976px;top:89px;width:2px;height:51px;background:#dcdcdc"></div>
<svg style="left:267px;top:132px" width="7" height="5" viewBox="0 0 7 5"><path d="M0 0h6L3 4.5z" fill="#333"/></svg>
<svg style="left:536px;top:132px" width="7" height="5" viewBox="0 0 7 5"><path d="M0 0h6L3 4.5z" fill="#333"/></svg>
<svg style="left:729.3px;top:132px" width="7" height="5" viewBox="0 0 7 5"><path d="M0 0h6L3 4.5z" fill="#333"/></svg>
<svg style="left:816.4px;top:132px" width="7" height="5" viewBox="0 0 7 5"><path d="M0 0h6L3 4.5z" fill="#333"/></svg>
<svg style="left:896.5px;top:132px" width="7" height="5" viewBox="0 0 7 5"><path d="M0 0h6L3 4.5z" fill="#333"/></svg>
<svg style="left:955px;top:132px" width="7" height="5" viewBox="0 0 7 5"><path d="M0 0h6L3 4.5z" fill="#333"/></svg>
<svg style="left:1014.5px;top:132px" width="7" height="5" viewBox="0 0 7 5"><path d="M0 0h6L3 4.5z" fill="#333"/></svg>
<svg style="left:138px;top:90px" width="33" height="33" viewBox="0 0 33 33"><g fill="none" stroke="#5a5a5a" stroke-width="1"><path d="M1.5 21V1.5H29.5V17M1.5 1.5V29.5H17"/>
<path d="M8.5 9V21.5M8.5 9H21.5"/><path d="M21.5 9c0 7-5 12.5-12 12.5"/></g>
<g fill="#5a5a5a"><rect x="0" y="0" width="3" height="3"/><rect x="28" y="0" width="3" height="3"/><rect x="0" y="28" width="3" height="3"/>
<rect x="7" y="7.5" width="3" height="3"/><rect x="20" y="7.5" width="3" height="3"/><rect x="7" y="20" width="3" height="3"/></g>
<path d="M23 18.5h4v5h5v4h-5v5h-4v-5h-5v-4h5z" fill="#2ea043"/></svg>
<svg style="left:182px;top:90px" width="30" height="33" viewBox="0 0 30 33"><path d="M0 6L5 1H22V28L18 31H0z" fill="#3b86c8"/><path d="M0 6H18V26H0z" fill="#5aa7e6"/><path d="M0 6L5 1H22L18 6z" fill="#8cc6f2"/>
<path d="M0 26H18V31H0z" fill="#b4b4b4"/><path d="M18 26L22 22V27L18 31z" fill="#999"/>
<path d="M26.5 30V4" stroke="#222" stroke-width="1.1"/><path d="M24 6.5L26.5 1.5L29 6.5z" fill="#222"/></svg>
<svg style="left:223px;top:91px" width="34" height="29" viewBox="0 0 34 29"><path d="M1 14C8 8 24 8 32 14L32 25C24 20 10 20 1 25z" fill="#5aa7e6"/>
<path d="M1 14C8 9 24 9 32 14L28 17C22 13 10 13 5 17z" fill="#8cc6f2"/>
<path d="M1 25V14L5 17V28z" fill="#3b86c8"/><path d="M28 17L32 14V25L28 28z" fill="#fff" stroke="#333" stroke-width="0.8"/>
<path d="M5 17C10 13 22 13 28 17V28C22 24 10 24 5 28z" fill="#5aa7e6"/>
<path d="M4 6C12 0 24 0 32 6" fill="none" stroke="#333" stroke-width="1.2"/><path d="M1 6.5L6 3.5L5.5 8z" fill="#333"/></svg>
<svg style="left:267px;top:90px" width="33" height="33" viewBox="0 0 33 33"><path d="M1 6L6 1H31V26L26 31H1z" fill="#d9d9d9" stroke="#5a5a5a" stroke-width="1"/>
<path d="M26 6L31 1V26L26 31z" fill="#b4b4b4" stroke="#5a5a5a" stroke-width="1"/><path d="M1 6H26V31" fill="none" stroke="#5a5a5a" stroke-width="1"/>
<circle cx="13.5" cy="18" r="8" fill="#fff" stroke="#333" stroke-width="1"/><circle cx="13.5" cy="18" r="6.3" fill="#5aa7e6"/>
<circle cx="16.2" cy="15.3" r="4" fill="#fff"/></svg>
<svg style="left:310px;top:92px" width="29" height="29" viewBox="0 0 29 29"><path d="M4 4H24M4 4V24M4 24H24" stroke="#333" stroke-width="1"/>
<rect x="0.5" y="0.5" width="6" height="6" fill="#fff" stroke="#333" stroke-width="1"/>
<rect x="21" y="0" width="7" height="7" fill="#5aa7e6"/><rect x="0" y="21" width="7" height="7" fill="#5aa7e6"/><rect x="21" y="21" width="7" height="7" fill="#5aa7e6"/></svg>
<svg style="left:353px;top:91px" width="32" height="32" viewBox="0 0 32 32"><path d="M3 9C3 5 6 4 9 4H22C26 4 28 6 28 10V25C28 29 25 31 21 31H9C5 31 2 29 2 25z" fill="#a77be0" stroke="#7a4fc0" stroke-width="1"/>
<path d="M5 8H21V28H5z" fill="#c39af0" opacity="0.6"/><path d="M13 8V30M3 18H24" stroke="#7a4fc0" stroke-width="1"/><path d="M24 16C27 15 30 17 30 21V27C30 29 28 30 26 30H24z" fill="#9060d0"/>
<path d="M25 0L26.5 4.5L31 3L28 7L32 9.5L27.5 10L28 15L25 11.5L22 15L22.5 10L18 9.5L22 7L19 3L23.5 4.5z" fill="#f5a300"/></svg>
<svg style="left:408px;top:90px" width="30" height="33" viewBox="0 0 30 33"><path d="M1 5L4 1H8V31H1z" fill="#d9d9d9" stroke="#5a5a5a" stroke-width="1"/>
<path d="M7 5L11 1H23V28L19 31H7z" fill="#3b86c8"/><path d="M7 5H19V31H7z" fill="#5aa7e6"/><path d="M7 5L11 1H23L19 5z" fill="#8cc6f2"/>
<path d="M19 16H27" stroke="#222" stroke-width="1.5"/><path d="M26 13.5L29.5 16L26 18.5z" fill="#222"/></svg>
<svg style="left:450px;top:90px" width="33" height="33" viewBox="0 0 33 33"><path d="M1 7L6 1H18C26 1 32 7 32 15V26L27 31H1z" fill="#d9d9d9" stroke="#5a5a5a" stroke-width="1"/>
<path d="M27 31V20L32 15V26z" fill="#b4b4b4" stroke="#5a5a5a" stroke-width="1"/>
<path d="M13 7L18 1C26 1 32 7 32 15L27 20C27 12 21 7 13 7z" fill="#5aa7e6"/></svg>
<svg style="left:493px;top:90px" width="32" height="33" viewBox="0 0 32 33"><path d="M1 6L6 1H31V26L26 31H1z" fill="#d9d9d9" stroke="#5a5a5a" stroke-width="1"/>
<path d="M26 6L31 1V26L26 31z" fill="#b4b4b4" stroke="#5a5a5a" stroke-width="1"/><path d="M1 6H26V31" fill="none" stroke="#5a5a5a" stroke-width="1"/>
<rect x="5" y="10" width="17" height="17" fill="#fff"/><path d="M6 11H11V21H21V26H6z" fill="#3b86c8"/><path d="M11 21L6 26H21V21z" fill="#8cc6f2"/></svg>
<svg style="left:536px;top:90px" width="33" height="33" viewBox="0 0 33 33"><path d="M12 6L16 1H32V20L28 24H12z" fill="#3b86c8"/><path d="M12 6H28V24H12z" fill="#5aa7e6"/><path d="M12 6L16 1H32L28 6z" fill="#8cc6f2"/>
<path d="M0 14L4 10H20V28L16 32H0z" fill="#3b86c8"/><path d="M0 14H16V32H0z" fill="#5aa7e6"/><path d="M0 14L4 10H12V14z" fill="#8cc6f2"/></svg>
<svg style="left:579px;top:90px" width="33" height="33" viewBox="0 0 33 33"><path d="M1 5L5 1H29V14L25 17H1z" fill="#3b86c8"/><path d="M1 5H25V17H1z" fill="#5aa7e6"/><path d="M1 5L5 1H29L25 5z" fill="#8cc6f2"/>
<path d="M0 18L32 13" stroke="#5aa7e6" stroke-width="1.5"/>
<path d="M1 20H25V31H1z" fill="#d9d9d9" stroke="#5a5a5a" stroke-width="1"/><path d="M25 20L29 17V28L25 31z" fill="#b4b4b4" stroke="#5a5a5a" stroke-width="1"/></svg>
<svg style="left:622px;top:90px" width="32" height="32" viewBox="0 0 32 32"><path d="M16 1L21 8H17.5V14.5H24V11L31 16L24 21V17.5H17.5V24H21L16 31L11 24H14.5V17.5H8V21L1 16L8 11V14.5H14.5V8H11z" fill="#2a2a2a"/></svg>
<svg style="left:676px;top:90px" width="32" height="32" viewBox="0 0 32 32"><path d="M1 5L4 2H15V15L12 18H1z" fill="#3b86c8"/><path d="M1 5H12V18H1z" fill="#5aa7e6"/>
<path d="M1 18H13V30H1z" fill="#d9d9d9" stroke="#5a5a5a" stroke-width="1"/><path d="M13 18H25V30H13z" fill="#d9d9d9" stroke="#5a5a5a" stroke-width="1"/>
<path d="M13 18L16 15H28L25 18z" fill="#eee" stroke="#5a5a5a" stroke-width="0.8"/><path d="M25 18L28 15V27L25 30z" fill="#b4b4b4" stroke="#5a5a5a" stroke-width="0.8"/>
<path d="M24 0L25.5 4L29.5 2.5L27.5 6.5L31.5 8.5L27 9.5L28 13.5L24.5 11L21 13.5L22 9.5L17.5 8.5L21.5 6.5L19.5 2.5L23 4z" fill="#f5a300"/></svg>
<svg style="left:720px;top:90px" width="31" height="32" viewBox="0 0 31 32"><path d="M1.5 10L8 3.5H14V10L10 14V25.5L1.5 30z" fill="#d9d9d9" stroke="#5a5a5a" stroke-width="1.1" stroke-linejoin="round"/>
<path d="M8 3.5C10 2.5 13 2.5 14 3.5V10C13 9 10 9 8 10z" fill="#f4f4f4" stroke="#5a5a5a" stroke-width="0.8"/>
<path d="M23 4.5L29.5 11V30L23 24V12z" fill="#d9d9d9" stroke="#5a5a5a" stroke-width="1.1" stroke-linejoin="round"/>
<path d="M17 14.5C17 13 23 13 23 14.5V24C23 25.5 17 25.5 17 24z" fill="#cfcfcf" stroke="#5a5a5a" stroke-width="1"/>
<path d="M19.5 4.5V13M17.5 11H21.5M11.5 14V21" stroke="#3b86c8" stroke-width="1.2"/></svg>
<svg style="left:773px;top:90px" width="31" height="32" viewBox="0 0 31 32"><path d="M1 30V17L5 12H13V30z" fill="#d9d9d9" stroke="#5a5a5a" stroke-width="1.1"/>
<path d="M14.5 1L29.5 16L19.5 26L4.5 11z" fill="#e29360" stroke="#d8864f" stroke-width="0.8"/>
<path d="M9 12H19L19 22z" fill="#f1d6bf"/>
<path d="M13 30V22L19 16V24z" fill="#3cb35a"/><path d="M13.5 21.5L20 9" stroke="#9be0a8" stroke-width="1.6" stroke-dasharray="2 1.2"/></svg>
<svg style="left:816px;top:89px" width="32" height="33" viewBox="0 0 32 33"><path d="M1 31V10L8 2H15V4L9 10V31z" fill="#d9d9d9" stroke="#5a5a5a" stroke-width="1.1"/>
<path d="M9 31V10L17 2V24z" fill="#52c07a" stroke="#3a9a5a" stroke-width="0.6"/>
<path d="M24 31V11L31 4V25z" fill="#e29360"/></svg>
<svg style="left:874px;top:97px" width="30" height="18" viewBox="0 0 30 18"><path d="M1 4H28" stroke="#333" stroke-width="1"/><path d="M1 0V8M28 0V8" stroke="#333" stroke-width="1"/>
<path d="M1 4L5 2V6z M28 4L24 2V6z" fill="#333"/><rect x="0" y="11" width="29" height="6" fill="#f5a300"/>
<path d="M3 11V13M7 11V14M11 11V13M15 11V14M19 11V13M23 11V14M27 11V13" stroke="#9a6a00" stroke-width="0.8"/></svg>
<svg style="left:932px;top:90px" width="30" height="31" viewBox="0 0 30 31"><rect x="0" y="0" width="29" height="30" fill="#7cc2f0"/><rect x="0" y="0" width="29" height="30" fill="none" stroke="#3b86c8" stroke-width="1"/>
<circle cx="21" cy="8" r="3.2" fill="#f7f0d8"/><path d="M0 24L8 13L15 19L20 15L29 22V30H0z" fill="#3b86c8"/></svg>
<svg style="left:987px;top:87px" width="39" height="39" viewBox="0 0 39 39"><rect x="0" y="0" width="38" height="38" fill="#1795d6"/>
<rect x="6" y="5.5" width="25" height="19" fill="none" stroke="#9fe3b8" stroke-width="1" stroke-dasharray="3 2"/>
<path d="M25 18V33L28.5 29.5L31.5 35.5L34 34.5L31 28.5H35.5z" fill="#fff" stroke="#1467a0" stroke-width="0.6"/></svg>

<div class="a" style="left:1px;top:998px;width:1919px;height:1px;background:#cfcfcf"></div>
<div class="a" style="left:1px;top:999px;width:1919px;height:41px;background:#f2f2f2"></div>
<svg style="left:12px;top:1015px" width="114" height="17" viewBox="0 0 114 17" fill="#444">
<rect x="0" y="1" width="2" height="14"/><path d="M2.5 8L12 1V15z"/>
<path d="M24.5 8L34 1V15z"/><rect x="35.3" y="5" width="1.8" height="6"/>
<path d="M50 0V16L61.7 8z"/>
<rect x="74" y="5" width="1.8" height="6"/><path d="M77 1V15L86.8 8z"/>
<path d="M100 1V15L109.8 8z"/><rect x="110" y="1" width="2" height="14"/>
</svg>
<div class="a" style="left:155px;top:1038px;width:169px;height:3px;background:#cfcfcf"></div>
<div class="a" style="left:154px;top:1033px;width:2px;height:6px;background:#cfcfcf"></div>
<div class="a" style="left:178px;top:1033px;width:2px;height:6px;background:#cfcfcf"></div>
<div class="a" style="left:202px;top:1033px;width:2px;height:6px;background:#cfcfcf"></div>
<div class="a" style="left:226px;top:1033px;width:2px;height:6px;background:#cfcfcf"></div>
<div class="a" style="left:250px;top:1033px;width:2px;height:6px;background:#cfcfcf"></div>
<div class="a" style="left:274px;top:1033px;width:2px;height:6px;background:#cfcfcf"></div>
<div class="a" style="left:298px;top:1033px;width:2px;height:6px;background:#cfcfcf"></div>
<div class="a" style="left:321px;top:1033px;width:2px;height:6px;background:#cfcfcf"></div>
<svg style="left:146px;top:1013px" width="17" height="17" viewBox="0 0 17 17"><path d="M1.5 1.5H13.5V9M1.5 1.5V13.5H8" fill="none" stroke="#555" stroke-width="1"/><g fill="#1e6ec8"><rect x="0" y="0" width="2.5" height="2.5"/><rect x="12" y="0" width="2.5" height="2.5"/><rect x="0" y="12" width="2.5" height="2.5"/></g>
<path d="M9 16L10 12.5L15 7.5L17 9.5L12 14.5z" fill="#f0c050"/><path d="M15 7.5L17 9.5L16 10.5L14 8.5z" fill="#e04040"/></svg>
<svg style="left:171px;top:1013px" width="17" height="17" viewBox="0 0 17 17"><path d="M0 4L3 1H11V13L8 15H0z" fill="#3b86c8"/><path d="M0 4H8V13H0z" fill="#5aa7e6"/><path d="M0 4L3 1H11L8 4z" fill="#8cc6f2"/><path d="M0 13H8V16H0z" fill="#c8c8c8"/>
<path d="M14 15V3" stroke="#222" stroke-width="1.3"/><path d="M12 4.5L14 1L16 4.5z" fill="#222"/></svg>
<svg style="left:195px;top:1013px" width="17" height="17" viewBox="0 0 17 17"><path d="M1 9L6 2H11C14 2 16 5 16 8V16H3C2 16 1 15 1 13z" fill="#d9d9d9" stroke="#555" stroke-width="1"/><path d="M1 9L6 2L10 4L5 11z" fill="#5aa7e6"/></svg>
<svg style="left:219px;top:1013px" width="17" height="17" viewBox="0 0 17 17"><path d="M1 9L6 2H11C14 2 16 5 16 8V16H3C2 16 1 15 1 13z" fill="#d9d9d9" stroke="#555" stroke-width="1"/><path d="M1 9L6 2L10 4L5 11z" fill="#5aa7e6"/></svg>
<svg style="left:243px;top:1013px" width="17" height="17" viewBox="0 0 17 17"><path d="M1 9L6 2H11C14 2 16 5 16 8V16H3C2 16 1 15 1 13z" fill="#d9d9d9" stroke="#555" stroke-width="1"/><path d="M1 9L6 2L10 4L5 11z" fill="#5aa7e6"/></svg>
<svg style="left:267px;top:1013px" width="17" height="17" viewBox="0 0 17 17"><path d="M1.5 1.5H13.5V9M1.5 1.5V13.5H8" fill="none" stroke="#555" stroke-width="1"/><g fill="#1e6ec8"><rect x="0" y="0" width="2.5" height="2.5"/><rect x="12" y="0" width="2.5" height="2.5"/><rect x="0" y="12" width="2.5" height="2.5"/></g>
<path d="M9 16L10 12.5L15 7.5L17 9.5L12 14.5z" fill="#f0c050"/><path d="M15 7.5L17 9.5L16 10.5L14 8.5z" fill="#e04040"/></svg>
<svg style="left:291px;top:1013px" width="17" height="17" viewBox="0 0 17 17"><path d="M0 4L3 1H11V13L8 15H0z" fill="#3b86c8"/><path d="M0 4H8V13H0z" fill="#5aa7e6"/><path d="M0 4L3 1H11L8 4z" fill="#8cc6f2"/><path d="M0 13H8V16H0z" fill="#c8c8c8"/>
<path d="M14 15V3" stroke="#222" stroke-width="1.3"/><path d="M12 4.5L14 1L16 4.5z" fill="#222"/></svg>
<svg style="left:315px;top:1013px" width="17" height="17" viewBox="0 0 17 17"><path d="M7 2V16H1z" fill="#fff" stroke="#555" stroke-width="1"/><path d="M9 2V16H15z" fill="#5aa7e6"/></svg>
<svg style="left:329px;top:1007px" width="13" height="34" viewBox="0 0 13 34"><path d="M0 0H12V5L7 10V33H5V10L0 5z" fill="#555"/></svg>
<svg style="left:1891px;top:1014px" width="18" height="18" viewBox="0 0 18 18"><g fill="#8c8c8c"><circle cx="9" cy="9" r="6"/><rect x="7.2" y="0.5" width="3.6" height="17"/><rect x="0.5" y="7.2" width="17" height="3.6"/><rect x="7.2" y="0.5" width="3.6" height="17" transform="rotate(45 9 9)"/><rect x="7.2" y="0.5" width="3.6" height="17" transform="rotate(-45 9 9)"/></g><circle cx="9" cy="9" r="2.6" fill="#f2f2f2"/></svg>

<div class="a" style="left:0;top:1040px;width:1920px;height:40px;background:linear-gradient(90deg,#233640 0%,#283d48 35%,#263845 58%,#22304a 80%,#1c2a48 100%)"></div>
<svg style="left:15px;top:1051px" width="18" height="18" viewBox="0 0 18 18" fill="#fff"><path d="M0 2.5L7.3 1.5V8.4H0z M8.2 1.4L18 0V8.4H8.2z M0 9.3H7.3V16.3L0 15.3z M8.2 9.3H18V17.8L8.2 16.4z"/></svg>
<div class="a" style="left:48px;top:1040px;width:344px;height:40px;background:#f2f2f2"></div>
<svg style="left:60px;top:1052px" width="17" height="16" viewBox="0 0 17 16"><circle cx="10.5" cy="6" r="5" fill="none" stroke="#222" stroke-width="1.4"/><path d="M7 9.5L1 15.5" stroke="#222" stroke-width="1.6"/></svg>
<svg style="left:314px;top:1043px" width="78" height="37" viewBox="0 0 78 37">
<path d="M0 37C5 25 20 20 40 22C60 20 74 26 78 37z" fill="#3d9a4a"/>
<path d="M14 16C14 12 28 10 40 10S66 12 66 16V37H14z" fill="#9b8a7c"/>
<ellipse cx="40" cy="16" rx="26" ry="6" fill="#c9b8a8"/>
<rect x="24" y="8" width="10" height="8" fill="#e07a3a"/><rect x="36" y="5" width="9" height="12" fill="#4f7fc8"/><rect x="47" y="9" width="10" height="7" fill="#5aa0d8"/>
<rect x="22" y="18" width="12" height="8" fill="#3a6ab0"/><rect x="44" y="18" width="14" height="9" fill="#e8c060"/>
<path d="M36 4L41 1L46 4z" fill="#4a5ab0"/>
<circle cx="8" cy="14" r="5" fill="#e0a040"/><path d="M4 11L12 17M5 16L11 12" stroke="#333" stroke-width="1.2"/>
<circle cx="70" cy="6" r="2.5" fill="#c060e0"/><circle cx="20" cy="3" r="1.8" fill="#70c0e0"/><circle cx="4" cy="28" r="1.6" fill="#f0b030"/>
</svg>
<svg style="left:408px;top:1053px" width="16" height="16" viewBox="0 0 16 16"><circle cx="8" cy="8" r="6.6" fill="none" stroke="#fff" stroke-width="1.8"/></svg>
<svg style="left:455px;top:1051px" width="18" height="17" viewBox="0 0 18 17" fill="none" stroke="#fff" stroke-width="1.5"><rect x="2.5" y="3.5" width="10" height="9"/><path d="M0.5 1H15M0.5 15.5H15"/><path d="M16 1V6M16 11V15.5" stroke-width="1.8"/><rect x="14.8" y="7.5" width="2.4" height="2.4" fill="#fff" stroke="none"/></svg>
<svg style="left:503px;top:1049px" width="24" height="20" viewBox="0 0 24 20"><path d="M0 2C0 1 1 0 2 0H8L10 2H22C23 2 24 3 24 4V18C24 19 23 20 22 20H2C1 20 0 19 0 18z" fill="#e8b000"/><path d="M0 5H24V18C24 19 23 20 22 20H2C1 20 0 19 0 18z" fill="#ffd65c"/><path d="M6 11H18V20H15V14H9V20H6z" fill="#2f7ed8"/></svg>
<svg style="left:552px;top:1048px" width="24" height="24" viewBox="0 0 24 24"><circle cx="12" cy="12" r="11.5" fill="#db4437"/>
<path d="M12 12L22 6.2A11.5 11.5 0 0 1 12 23.5z" fill="#ffcd40"/><path d="M12 12V23.5A11.5 11.5 0 0 1 2 6.3z" fill="#0f9d58"/>
<path d="M12 12L2 6.3A11.5 11.5 0 0 1 22 6.2z" fill="#db4437"/>
<circle cx="12" cy="12" r="5.4" fill="#fff"/><circle cx="12" cy="12" r="4.2" fill="#4285f4"/></svg>
<svg style="left:601px;top:1048px" width="25" height="24" viewBox="0 0 25 24"><defs><linearGradient id="vx" x1="0" x2="1"><stop offset="0" stop-color="#d01010"/><stop offset="0.35" stop-color="#2020c0"/><stop offset="1" stop-color="#000"/></linearGradient></defs>
<rect x="0" y="0" width="25" height="24" fill="url(#vx)"/><rect x="0.5" y="0.5" width="24" height="23" fill="none" stroke="#ccc" stroke-width="1"/>
<text x="12.5" y="17" font-size="13" text-anchor="middle" fill="#fff" font-family="Liberation Serif, serif" font-weight="bold">ViX</text></svg>
<div class="a" style="left:637px;top:1040px;width:49px;height:40px;background:#3a4c58"></div>
<div class="a" style="left:637px;top:1078px;width:49px;height:2px;background:#8cc8f0"></div>
<svg style="left:651px;top:1048px" width="23" height="24" viewBox="0 0 23 24"><rect x="1" y="1" width="20" height="22" rx="3" fill="#c4501b"/><rect x="1" y="1" width="20" height="15" rx="3" fill="#f47a20"/><rect x="17" y="3" width="4" height="19" fill="#d9601c"/>
<path d="M7 4h7v2.5H10v2.5h3.6v2.3H10V15H7z" fill="#fff"/><text x="10" y="21" font-size="5" text-anchor="middle" fill="#fbd0b0" font-family="Liberation Sans, sans-serif" font-weight="bold">360</text></svg>
<svg style="left:1529px;top:1047px" width="25" height="26" viewBox="0 0 25 26"><path d="M1 13C1 7 6 4 11 4S21 7 21 13C19 11.5 17 11.5 15 13C13 11.5 9 11.5 7 13C5 11.5 3 11.5 1 13z" fill="#5ab4f0"/>
<path d="M11 4V22C11 24 9 25 7.5 24" fill="none" stroke="#999" stroke-width="1.5"/><circle cx="20" cy="22" r="3" fill="#e02030"/>
<path d="M16 2L15 4M19 1L18 3M22 3L21 5M18 6L17 8M21 7L20 9" stroke="#5ab4f0" stroke-width="1.1"/></svg>
<svg style="left:1685px;top:1056px" width="12" height="8" viewBox="0 0 12 8"><path d="M0.7 7L6 1.5L11.3 7" fill="none" stroke="#fff" stroke-width="1.2"/></svg>
<svg style="left:1709px;top:1052px" width="13" height="16" viewBox="0 0 13 16" fill="none" stroke="#fff" stroke-width="1"><path d="M2 2C1 3 1 5 1 8S1 13 2 14M8 2C9 3 9 5 9 8"/><rect x="2.5" y="5" width="6" height="6" rx="1"/><path d="M9 7L12 5V11L9 9"/><path d="M3 15H8"/></svg>
<svg style="left:1731px;top:1053px" width="17" height="15" viewBox="0 0 17 15" fill="none" stroke="#fff" stroke-width="1"><rect x="4.5" y="0.5" width="12" height="9"/><path d="M10.5 9.5V13M7 13.5H14M0.5 3.5H4M0.5 3.5V12M0.5 8H4"/></svg>
<svg style="left:1754px;top:1053px" width="18" height="15" viewBox="0 0 18 15" fill="none" stroke="#fff" stroke-width="1"><path d="M0.5 5H4L8.5 1V14L4 10H0.5z"/><path d="M11 4.5C12 5.5 12 9.5 11 10.5M13.5 3C15 5 15 10 13.5 12M16 1.5C18 4 18 11 16 13.5" stroke-opacity="0.85"/></svg>
<svg style="left:1878px;top:1051px" width="26" height="26" viewBox="0 0 26 26"><path d="M0.5 0.5H17.5V12.5H7L3 16V12.5H0.5z" fill="#fff"/><path d="M3 3.5H15M3 6.5H15M3 9.5H11" stroke="#1d2a46" stroke-width="1"/>
<circle cx="15.5" cy="17" r="6.5" fill="#2a2f38" stroke="#aaa" stroke-width="1"/><text x="15.5" y="21" font-size="10" text-anchor="middle" fill="#fff" font-family="Liberation Sans, sans-serif">1</text></svg>
<div class="a" style="left:1915px;top:1040px;width:1px;height:40px;background:#6a7890"></div>
<div class="t" style="left:24.5px;top:11.7px;font-size:11.5px;font-weight:normal;color:#777;transform:scaleX(0.9987);transform-origin:0 0">Autodesk Fusion 360 (個人用 - 商用利用不可)</div>
<div class="t" style="left:862.0px;top:45.4px;font-size:12.5px;font-weight:normal;color:#333;transform:scaleX(0.784);transform-origin:0 0">15、腰部フロントアーマー裏 v8*</div>
<div class="t" style="left:1736.0px;top:41.6px;font-size:12.5px;font-weight:normal;color:#333;transform:scaleX(0.882);transform-origin:0 0">9/10</div>
<div class="t" style="left:42.7px;top:98.0px;font-size:10.5px;font-weight:bold;color:#222;transform:scaleX(0.8469);transform-origin:0 0;-webkit-text-stroke:0.35px #222">デザイン</div>
<div class="t" style="left:149.0px;top:68.5px;font-size:10.0px;font-weight:bold;color:#0e78bd;transform:scaleX(0.8524);transform-origin:0 0;-webkit-text-stroke:0.35px #0e78bd">ソリッド</div>
<div class="t" style="left:227.0px;top:67.5px;font-size:10.5px;font-weight:normal;color:#333;transform:scaleX(0.7861);transform-origin:0 0">サーフェス</div>
<div class="t" style="left:314.4px;top:67.5px;font-size:12.0px;font-weight:normal;color:#333;transform:scaleX(0.729);transform-origin:0 0">メッシュ</div>
<div class="t" style="left:388.4px;top:67.5px;font-size:10.5px;font-weight:normal;color:#333;transform:scaleX(0.7981);transform-origin:0 0">シート メタル</div>
<div class="t" style="left:486.8px;top:68.5px;font-size:10.5px;font-weight:normal;color:#333;transform:scaleX(0.7107);transform-origin:0 0">プラスチック</div>
<div class="t" style="left:579.8px;top:68.5px;font-size:10.5px;font-weight:normal;color:#333;transform:scaleX(0.717);transform-origin:0 0">ユーティリティ</div>
<div class="t" style="left:243.0px;top:130.3px;font-size:9.5px;font-weight:normal;color:#333;transform:scaleX(1.0025);transform-origin:0 0">作成</div>
<div class="t" style="left:511.0px;top:130.3px;font-size:9.5px;font-weight:normal;color:#333;transform:scaleX(1.0403);transform-origin:0 0">修正</div>
<div class="t" style="left:684.7px;top:129.3px;font-size:10.5px;font-weight:normal;color:#333;transform:scaleX(0.7761);transform-origin:0 0">アセンブリ</div>
<div class="t" style="left:791.6px;top:130.3px;font-size:9.5px;font-weight:normal;color:#333;transform:scaleX(1.1277);transform-origin:0 0">構築</div>
<div class="t" style="left:871.9px;top:130.3px;font-size:9.5px;font-weight:normal;color:#333;transform:scaleX(1.1277);transform-origin:0 0">検査</div>
<div class="t" style="left:929.3px;top:130.3px;font-size:9.5px;font-weight:normal;color:#333;transform:scaleX(1.1671);transform-origin:0 0">挿入</div>
<div class="t" style="left:988.7px;top:130.3px;font-size:9.5px;font-weight:normal;color:#333;transform:scaleX(1.1302);transform-origin:0 0">選択</div>
<div class="t" style="left:28.0px;top:159.6px;font-size:9.5px;font-weight:normal;color:#444;transform:scaleX(0.841);transform-origin:0 0">ブラウザ</div>
<div class="t" style="left:98.0px;top:187.7px;font-size:9.5px;font-weight:bold;color:#fff;transform:scaleX(1.0435);transform-origin:0 0;-webkit-text-stroke:0.35px #fff">15. 腰部フロントアーマー裏 v8</div>
<div class="t" style="left:89.5px;top:211.0px;font-size:10.5px;font-weight:normal;color:#222;transform:scaleX(0.8204);transform-origin:0 0">ドキュメントの設定</div>
<div class="t" style="left:89.25px;top:235.0px;font-size:9.5px;font-weight:normal;color:#222;transform:scaleX(0.9565);transform-origin:0 0">ビュー管理</div>
<div class="t" style="left:115.7px;top:259.6px;font-size:9.5px;font-weight:normal;color:#222;transform:scaleX(1.1557);transform-origin:0 0">原点</div>
<div class="t" style="left:115.7px;top:283.6px;font-size:11.5px;font-weight:normal;color:#222;transform:scaleX(0.7161);transform-origin:0 0">ボディ</div>
<div class="t" style="left:115.7px;top:305.5px;font-size:12.0px;font-weight:normal;color:#222;transform:scaleX(0.6769);transform-origin:0 0">スケッチ</div>
<div class="t" style="left:27.0px;top:975.5px;font-size:11.5px;font-weight:normal;color:#444;transform:scaleX(0.7306);transform-origin:0 0">コメント</div>
<div class="t" style="left:86.5px;top:1054.75px;font-size:12.5px;font-weight:normal;color:#333;transform:scaleX(0.9803);transform-origin:0 0">ここに入力して検索</div>
<div class="t" style="left:1560.3px;top:1052.7px;font-size:15.5px;font-weight:normal;color:#fff;transform:scaleX(0.7491);transform-origin:0 0">雨が近づいています</div>
<div class="t" style="left:1779.0px;top:1050.8px;font-size:19.0px;font-weight:normal;color:#fff;transform:scaleX(1.043);transform-origin:0 0">A</div>
<div class="t" style="left:1817.0px;top:1046.0px;font-size:11.0px;font-weight:normal;color:#fff;transform:scaleX(1.058);transform-origin:0 0">21:48</div>
<div class="t" style="left:1802.0px;top:1064.3px;font-size:11.0px;font-weight:normal;color:#fff;transform:scaleX(1.0834);transform-origin:0 0">2022/08/20</div>
<div class="a" style="left:0;top:0;width:1920px;height:1px;background:#1d2b48"></div>
<div class="a" style="left:0;top:0;width:1px;height:1040px;background:#2f6178"></div>
</body></html>
